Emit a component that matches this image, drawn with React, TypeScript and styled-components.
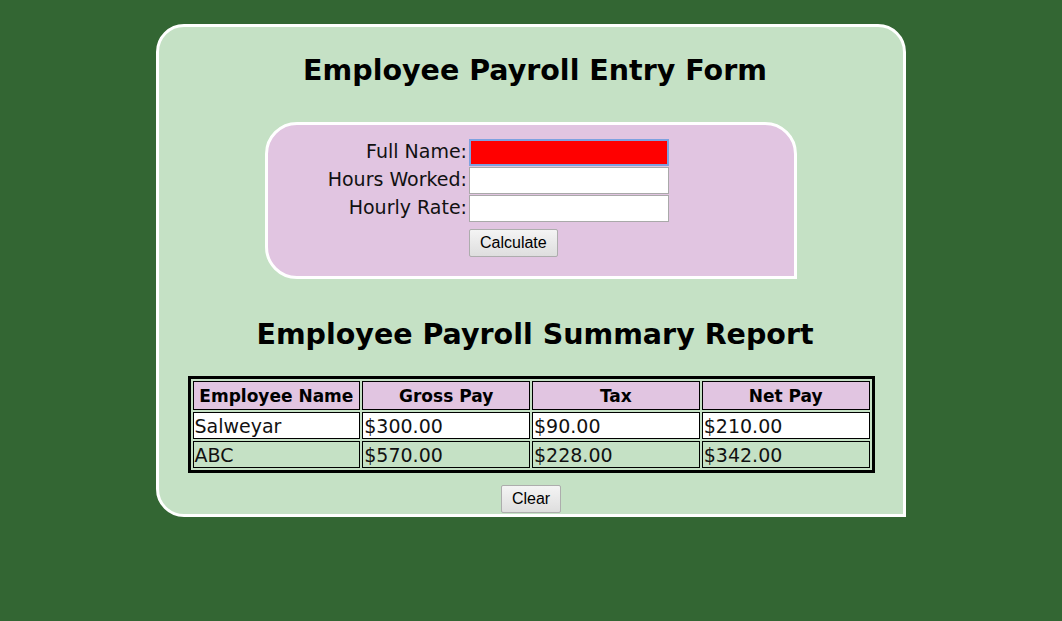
import React from 'react'
import styled, { createGlobalStyle } from 'styled-components'

// ______________________________________________________
//
const green = '#336633'
const lightGreen = '#c5e1c5'
const lilac = '#e1c5e1'

const GlobalStyle = createGlobalStyle`
  body {
    margin: 0;
    background: ${green};
    font-family: "DejaVu Sans", Verdana, sans-serif;
  }
`

type Row = { name: string; gross: string; tax: string; net: string }

const rows: Row[] = [
  { name: 'Salweyar', gross: '$300.00', tax: '$90.00', net: '$210.00' },
  { name: 'ABC', gross: '$570.00', tax: '$228.00', net: '$342.00' },
]

// ______________________________________________________
//
const Page = styled.div`
  padding-top: 24px;
  min-height: 621px;
  box-sizing: border-box;
`

const Card = styled.div`
  box-sizing: border-box;
  width: 750px;
  margin: 0 auto;
  padding: 24px 0 1px;
  background: ${lightGreen};
  border: 3px solid #fff;
  border-radius: 28px 28px 0 28px;
  display: flex;
  flex-direction: column;
  align-items: center;
`

const Title = styled.h1`
  margin: 0;
  padding-left: 8px;
  font-size: 28.5px;
  line-height: 40px;
  font-weight: bold;
  color: #000;
`

const FormBox = styled.form`
  box-sizing: border-box;
  width: 532px;
  margin-top: 31px;
  padding: 14px 0 19px;
  background: ${lilac};
  border: 3px solid #fff;
  border-radius: 32px 32px 0 32px;
  display: grid;
  grid-template-columns: 199px 200px;
  column-gap: 2px;
  row-gap: 1px;
  align-items: center;
`

const Label = styled.label`
  text-align: right;
  font-size: 19px;
  line-height: 24px;
  padding-bottom: 3px;
  color: #111;
`

const Input = styled.input<{ $invalid?: boolean }>`
  box-sizing: border-box;
  width: 200px;
  height: 27px;
  margin: 0;
  padding: 0 2px;
  font-size: 16px;
  background: ${p => (p.$invalid ? '#ff0000' : '#fff')};
  border: ${p => (p.$invalid ? '2px solid #7da2e0' : '1px solid #a9a9a9')};
  outline: none;
`

const Button = styled.button<{ $col?: number }>`
  grid-column: ${p => p.$col ?? 'auto'};
  justify-self: start;
  height: 28px;
  margin-top: 6px;
  padding: 0 10px;
  font-family: "Liberation Sans", Arial, sans-serif;
  font-size: 16px;
  color: #000;
  background: linear-gradient(#f4f4f4, #dedede);
  border: 1px solid #adadad;
  border-radius: 2px;
`

const ReportTitle = styled(Title)`
  margin-top: 36px;
`

const Table = styled.table`
  margin-top: 21px;
  width: 687px;
  border: 3px solid #000;
  border-spacing: 2px;
  table-layout: fixed;
`

const Th = styled.th`
  height: 27px;
  padding: 0;
  background: ${lilac};
  border: 1px solid #000;
  font-size: 17px;
  font-weight: bold;
  text-align: center;
`

const Td = styled.td<{ $alt?: boolean }>`
  height: 25px;
  padding: 0 1px;
  background: ${p => (p.$alt ? lightGreen : '#fff')};
  border: 1px solid #000;
  font-size: 19px;
  color: #111;
`

const ClearButton = styled(Button)`
  margin-top: 12px;
`

// ______________________________________________________
//
const App: React.FC = () => (
  <Page>
    <GlobalStyle />
    <Card>
      <Title>Employee Payroll Entry Form</Title>
      <FormBox onSubmit={e => e.preventDefault()}>
        <Label>Full Name:</Label>
        <Input $invalid />
        <Label>Hours Worked:</Label>
        <Input />
        <Label>Hourly Rate:</Label>
        <Input />
        <Button type="submit" $col={2}>
          Calculate
        </Button>
      </FormBox>
      <ReportTitle>Employee Payroll Summary Report</ReportTitle>
      <Table>
        <thead>
          <tr>
            <Th>Employee Name</Th>
            <Th>Gross Pay</Th>
            <Th>Tax</Th>
            <Th>Net Pay</Th>
          </tr>
        </thead>
        <tbody>
          {rows.map((r, i) => (
            <tr key={r.name}>
              <Td $alt={i % 2 === 1}>{r.name}</Td>
              <Td $alt={i % 2 === 1}>{r.gross}</Td>
              <Td $alt={i % 2 === 1}>{r.tax}</Td>
              <Td $alt={i % 2 === 1}>{r.net}</Td>
            </tr>
          ))}
        </tbody>
      </Table>
      <ClearButton type="button">Clear</ClearButton>
    </Card>
  </Page>
)

// ______________________________________________________
//
export default App
